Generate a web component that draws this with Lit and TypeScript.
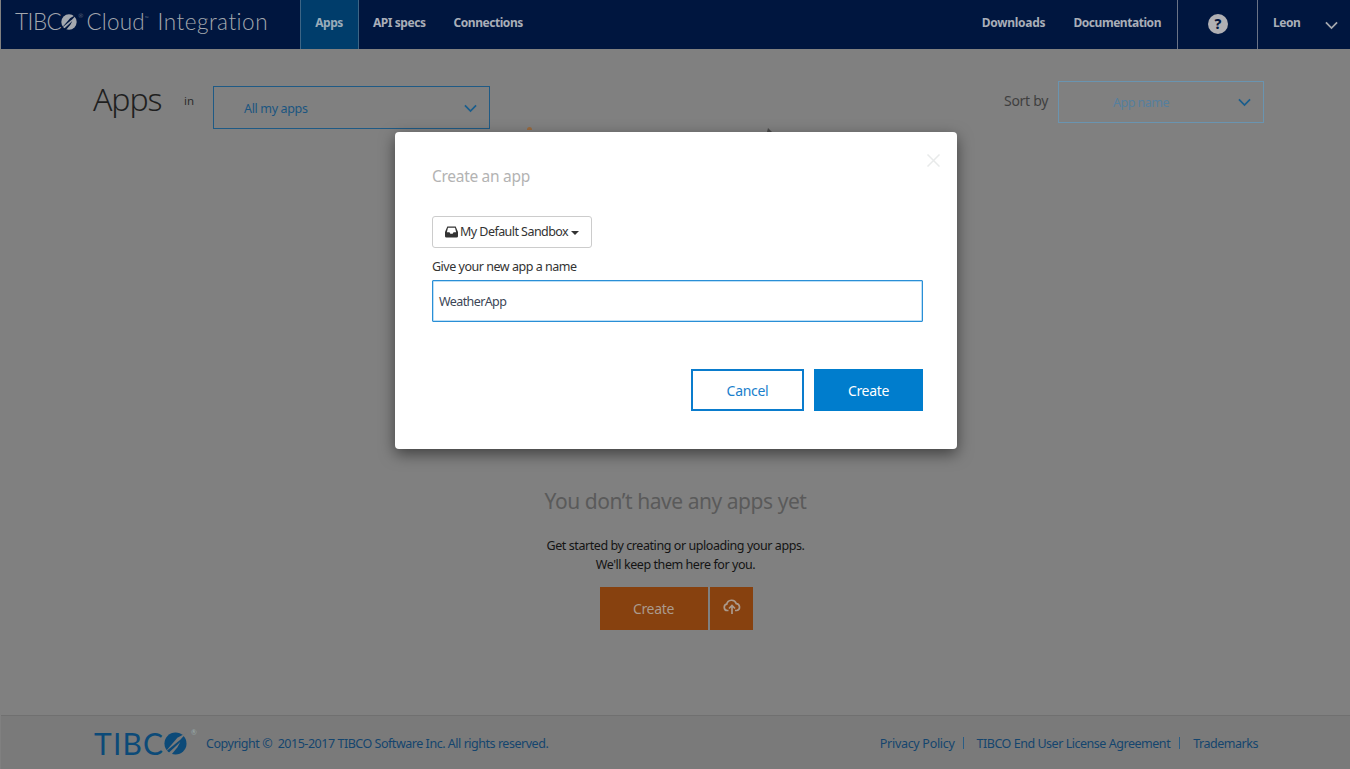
import { LitElement, html, css } from "lit";
import { customElement } from "lit/decorators.js";

const chevron = () => html`<svg viewBox="0 0 14 9" width="13" height="9"><path d="M1 1.2 7 7.2 13 1.2" fill="none" stroke="currentColor" stroke-width="1.9"/></svg>`;

const ball = (fg: string, cut: string) => html`<svg class="ball" viewBox="0 0 24 24"><circle cx="12" cy="12" r="11.5" fill=${fg}/><path d="M1 21 14 6 24 .5 17 8Z" fill=${cut}/><path d="M3 23.500 17 10.500 14 16 7 24.500Z" fill=${cut}/></svg>`;

@customElement("app-root")
export class AppRoot extends LitElement {
  static styles = css`
    :host { display: block; position: relative; width: 1350px; height: 769px; overflow: hidden; font-family: "Noto Sans", "Open Sans", sans-serif; background: #808080; color: #222; }
    * { box-sizing: border-box; }
    .page { display: flex; flex-direction: column; height: 769px; padding-left: 1px; }
    .nav { display: flex; height: 49px; background: #00163f; color: #a9aeb8; flex: none; font-size: 12px; font-weight: 700; letter-spacing: -0.45px; }
    .brand { display: flex; align-items: center; width: 299px; padding: 0 0 6px 14px; font-family: "Lato", sans-serif; font-weight: 300; font-size: 22.5px; letter-spacing: 0.5px; color: #a4a8ae; white-space: nowrap; }
    .tibco { letter-spacing: -0.5px; }
    .brand .ball { width: 16px; height: 16px; flex: none; }
    .tm { font-size: 6px; align-self: flex-start; margin: 12px 3px 0 1px; letter-spacing: 0; }
    .tm.t { margin: 15px 9px 0 0; font-size: 5px; }
    .cloud { letter-spacing: 0.2px; }
    .tab { display: flex; align-items: center; padding-bottom: 4px; white-space: nowrap; }
    .tab.active { width: 59px; justify-content: center; background: #003d6b; border-left: 1px solid #3d6585; border-right: 1px solid #3d6585; color: #9aacba; padding-right: 1px; }
    .t1 { margin-left: 14px; }
    .t2 { margin-left: 28px; }
    .spacer { flex: 1; }
    .rule { width: 1px; background: #6a7386; }
    .t3 { margin-right: 28px; letter-spacing: -0.25px; }
    .t4 { margin-right: 16px; }
    .help { width: 79px; display: flex; align-items: center; justify-content: center; padding-bottom: 1px; }
    .helpdot { width: 20px; height: 20px; border-radius: 50%; background: #b0b0b4; color: #00163f; display: flex; align-items: center; justify-content: center; font-size: 14px; font-weight: 800; padding-bottom: 1px; margin-left: 1px; letter-spacing: 0; }
    .user { width: 92px; display: flex; align-items: center; padding: 0 12px 4px 15px; justify-content: space-between; }
    .user svg { color: #a4a8ae; margin-top: 5px; }
    .head { display: flex; align-items: flex-start; height: 120px; flex: none; }
    .title { margin: 28px 0 0 92px; font-size: 32px; line-height: 44px; font-weight: 300; color: #1f1f1f; letter-spacing: -1.1px; width: 91px; flex: none; }
    .in { margin-top: 44px; font-size: 11.5px; line-height: 16px; color: #2c2c2c; width: 29px; flex: none; }
    .sel { display: flex; align-items: center; justify-content: space-between; flex: none; font-size: 12.5px; letter-spacing: -0.35px; }
    .sel1 { margin-top: 37px; width: 277px; height: 43px; border: 1px solid #1f5a85; padding: 1px 12.5px 0 30px; color: #1a5580; }
    .sel2 { margin: 32px 86px 0 0; width: 206px; height: 42px; border: 1px solid #6a94b0; padding: 0 12px 0 54px; color: #557f9e; letter-spacing: -0.5px; }
    .sel svg { color: #1a5d8c; }
    .sort { margin: 44px 0 0 auto; font-size: 14px; line-height: 16px; color: #3f3f3f; width: 54px; flex: none; letter-spacing: -0.3px; white-space: nowrap; }
    .main { flex: 1; display: flex; flex-direction: column; align-items: center; position: relative; }
    .peek { position: absolute; top: -42px; }
    .peek.a { left: 526px; width: 5px; height: 3px; border-radius: 3px 3px 0 0; background: #9a6a3e; }
    .peek.b { left: 766px; top: -41px; width: 5px; height: 4px; background: #4a4a4a; clip-path: polygon(20% 0, 100% 100%, 0 100%); }
    .empty-title { margin: 318px 0 0; font-size: 21px; line-height: 28px; font-weight: 400; color: #5a5a5a; letter-spacing: -0.45px; }
    .empty-text { margin: 21px 0 0; font-size: 12.5px; line-height: 19px; color: #141414; text-align: center; letter-spacing: -0.43px; }
    .cta { display: flex; gap: 2px; margin: 13px 0 0 1px; }
    .cta div { background: #87410f; height: 43px; display: flex; align-items: center; justify-content: center; color: #ab9a8c; font-size: 14px; letter-spacing: -0.3px; }
    .cta .c1 { width: 108px; }
    .cta .c2 { width: 43px; }
    .cta svg { margin: -4px 0 0 2px; }
    .foot { height: 54px; flex: none; background: #7a7a7a; border-top: 1px solid #707070; display: flex; align-items: center; padding: 1px 92px 0 93px; color: #14456e; font-size: 12.5px; letter-spacing: -0.47px; }
    .flogo { display: flex; align-items: center; font-family: "Lato", sans-serif; font-weight: 400; font-size: 30px; letter-spacing: 1.2px; color: #0c4a78; width: 112px; flex: none; position: relative; height: 30px; }
    .flogo .ball { width: 23px; height: 23px; flex: none; }
    .flogo .r { position: absolute; left: 97px; top: 1px; font-size: 7px; line-height: 7px; letter-spacing: 0; color: #9aa; }
    .links { margin-left: auto; display: flex; align-items: center; }
    .links i { width: 1px; height: 12px; background: #2a5d85; margin: 0 13px 0 9px; }
    .links i.first { margin-left: 8px; }
    .privacy { letter-spacing: -0.3px; }

    .modal { position: absolute; left: 395px; top: 132px; width: 562px; height: 317px; background: #fff; border-radius: 4px; box-shadow: 0 5px 15px rgba(0,0,0,.5); padding: 36px 34px 0 37px; display: flex; flex-direction: column; }
    .modal h2 { margin: 0; font-size: 15.5px; line-height: 17px; font-weight: 400; color: #b3b3b3; letter-spacing: -0.3px; }
    .close { position: absolute; right: 17px; top: 22px; }
    .dd { align-self: flex-start; margin-top: 31px; height: 32px; width: 160px; border: 1px solid #ccc; border-radius: 3px; display: flex; align-items: center; padding: 0 0 1px 12px; font-size: 12.5px; letter-spacing: -0.55px; color: #333; white-space: nowrap; gap: 2px; }
    .caret { width: 0; height: 0; border-left: 4px solid transparent; border-right: 4px solid transparent; border-top: 4px solid #333; margin: 2px 0 0 1px; }
    label { margin-top: 10px; font-size: 12.5px; line-height: 17px; color: #333; letter-spacing: -0.48px; }
    .input { margin-top: 5px; height: 42px; border: 1px solid #2a8fd6; box-shadow: inset 0 0 0 .5px #7cc0ee; border-radius: 1px; display: flex; align-items: center; padding-left: 6px; font-size: 12.5px; letter-spacing: -0.6px; color: #3c4656; }
    .btns { display: flex; justify-content: flex-end; gap: 10px; margin-top: 47px; }
    .btn { height: 42px; display: flex; align-items: center; justify-content: center; font-size: 14px; letter-spacing: -0.3px; }
    .cancel { width: 113px; border: 2px solid #0a7ccd; color: #1a80cc; }
    .create { width: 109px; background: #007dcd; color: #fff; }
  `;

  render() {
    return html`
      <div class="page">
        <header class="nav">
          <div class="brand"><span class="tibco">TIBC</span>${ball("#a4a8ae", "#00163f")}<span class="tm">®</span><span class="cloud">Cloud</span><span class="tm t">™</span>Integration</div>
          <div class="tab active">Apps</div>
          <div class="tab t1">API specs</div>
          <div class="tab t2">Connections</div>
          <div class="spacer"></div>
          <div class="tab t3">Downloads</div>
          <div class="tab t4">Documentation</div>
          <div class="rule"></div>
          <div class="help"><div class="helpdot">?</div></div>
          <div class="rule"></div>
          <div class="user"><span>Leon</span>${chevron()}</div>
        </header>
        <section class="head">
          <h1 class="title">Apps</h1>
          <div class="in">in</div>
          <div class="sel sel1"><span>All my apps</span>${chevron()}</div>
          <div class="sort">Sort by</div>
          <div class="sel sel2"><span>App name</span>${chevron()}</div>
        </section>
        <main class="main">
          <span class="peek a"></span><span class="peek b"></span>
          <h3 class="empty-title">You don’t have any apps yet</h3>
          <p class="empty-text">Get started by creating or uploading your apps.<br/>We'll keep them here for you.</p>
          <div class="cta">
            <div class="c1">Create</div>
            <div class="c2"><svg width="18" height="16" viewBox="0 0 18 16" fill="none" stroke="#ab9a8c" stroke-width="1.7"><path d="M5.500 11.500H4.200a3.200 3.200 0 0 1-.5-6.300 5 5 0 0 1 9.600-.6 3.500 3.500 0 0 1 .5 6.900h-1.800"/><path d="M9 15V7M6 9.500 9 6.500l3 3"/></svg></div>
          </div>
        </main>
        <footer class="foot">
          <div class="flogo">TIBC${ball("#0c4a78", "#7a7a7a")}<span class="r">®</span></div>
          <span>Copyright ©&nbsp; 2015-2017 TIBCO Software Inc. All rights reserved.</span>
          <div class="links"><span class="privacy">Privacy Policy</span><i class="first"></i><span>TIBCO End User License Agreement</span><i></i><span>Trademarks</span></div>
        </footer>
      </div>
      <div class="modal">
        <svg class="close" width="13" height="13" viewBox="0 0 13 13"><path d="M.5.5l12 12M12.500.5l-12 12" stroke="#e8eaea" stroke-width="1.500"/></svg>
        <h2>Create an app</h2>
        <div class="dd"><svg width="13" height="12" viewBox="0 0 14 12"><path d="M2.500 0h9L14 6v4.500a1.500 1.500 0 0 1-1.500 1.500h-11A1.500 1.500 0 0 1 0 10.500V6zM3.200 1.500 2 6.200h2.800l1 1.800h2.400l1-1.800H12l-1.200-4.700z" fill="#333" fill-rule="evenodd"/></svg><span>My Default Sandbox</span><span class="caret"></span></div>
        <label>Give your new app a name</label>
        <div class="input">WeatherApp</div>
        <div class="btns"><div class="btn cancel">Cancel</div><div class="btn create">Create</div></div>
      </div>
    `;
  }
}
